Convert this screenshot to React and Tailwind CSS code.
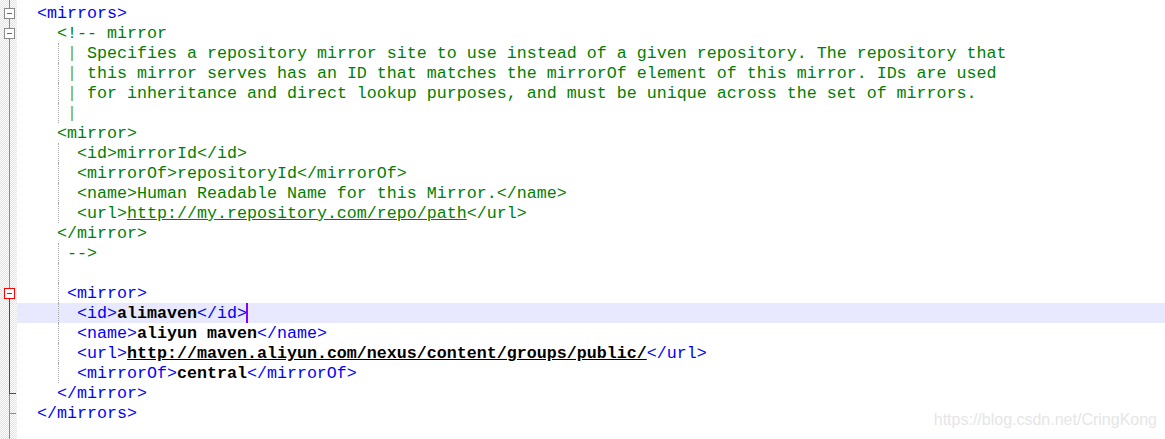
import React from 'react';

// segment kinds: tag (blue), com (green comment), pipe, bold, burl (bold underlined), curl (comment underlined)
const lines = [
    [['tag', '<mirrors>']],
    [['com', '  <!-- mirror']],
    [['com', '   '], ['pipe', '|'], ['com', ' Specifies a repository mirror site to use instead of a given repository. The repository that']],
    [['com', '   '], ['pipe', '|'], ['com', ' this mirror serves has an ID that matches the mirrorOf element of this mirror. IDs are used']],
    [['com', '   '], ['pipe', '|'], ['com', ' for inheritance and direct lookup purposes, and must be unique across the set of mirrors.']],
    [['com', '   '], ['pipe', '|']],
    [['com', '  <mirror>']],
    [['com', '    <id>mirrorId</id>']],
    [['com', '    <mirrorOf>repositoryId</mirrorOf>']],
    [['com', '    <name>Human Readable Name for this Mirror.</name>']],
    [['com', '    <url>'], ['curl', 'http://my.repository.com/repo/path'], ['com', '</url>']],
    [['com', '  </mirror>']],
    [['com', '   -->']],
    [],
    [['tag', '   <mirror>']],
    [['tag', '    <id>'], ['bold', 'alimaven'], ['tag', '</id>'], ['cursor', '']],
    [['tag', '    <name>'], ['bold', 'aliyun maven'], ['tag', '</name>']],
    [['tag', '    <url>'], ['burl', 'http://maven.aliyun.com/nexus/content/groups/public/'], ['tag', '</url>']],
    [['tag', '    <mirrorOf>'], ['bold', 'central'], ['tag', '</mirrorOf>']],
    [['tag', '  </mirror>']],
    [['tag', '</mirrors>']],
];

const guideLines = [2, 3, 4, 5, 7, 8, 9, 10, 12, 13, 14, 15, 16, 17, 18];

const Segment = ({ kind, text }) => {
    if (kind === 'tag') return <span className="text-[#0000ff]">{text}</span>;
    if (kind === 'com') return <span className="text-[#008000]">{text}</span>;
    if (kind === 'pipe') return <span className="text-[#6cb000]">{text}</span>;
    if (kind === 'bold') return <span className="font-bold text-black">{text}</span>;
    if (kind === 'burl') return <span className="font-bold text-black underline">{text}</span>;
    if (kind === 'curl') return <span className="text-[#008000] underline">{text}</span>;
    if (kind === 'cursor') return <span className="inline-block w-[2px] h-[20px] align-top -ml-[1px] bg-[#8000ff]" />;
    return null;
};

const FoldBox = ({ red }) => (
    <div className={`relative z-10 ml-[4px] w-[11px] h-[11px] border bg-white flex items-center justify-center ${red ? 'border-[#ff0000]' : 'border-[#8c8c8c]'}`}>
        <div className={`w-[5px] h-px ${red ? 'bg-[#ff0000]' : 'bg-[#666]'}`} />
    </div>
);

const GutterCell = ({ i }) => {
    if (i === 0 || i === 1) {
        return (
            <div className="h-[20px] flex items-center">
                <FoldBox />
            </div>
        );
    }
    if (i === 14) {
        return (
            <div className="h-[20px] flex flex-col pt-[5px]">
                <FoldBox red />
                <div className="relative z-10 ml-[9px] w-px flex-1 bg-[#ff0000]" />
            </div>
        );
    }
    if (i >= 15 && i <= 18) {
        return (
            <div className="h-[20px] flex">
                <div className="relative z-10 ml-[9px] w-px bg-[#ff0000]" />
            </div>
        );
    }
    if (i === 19) {
        return (
            <div className="h-[20px]">
                <div className="relative z-10 ml-[9px] w-[7px] h-[11px] border-l border-b border-[#ff0000]" />
            </div>
        );
    }
    if (i === 20) {
        return (
            <div className="h-[20px] pt-[10px]">
                <div className="ml-[9px] w-[7px] h-px bg-[#8c8c8c]" />
            </div>
        );
    }
    return <div className="h-[20px]" />;
};

const App = () => {
    return (
        <div className="relative w-[1165px] h-[439px] bg-white overflow-hidden flex">
            {/* fold margin */}
            <div className="relative w-[17px] shrink-0 pt-[3px] bg-[repeating-conic-gradient(#e2e2e2_0_25%,#ffffff_0_50%)] bg-[length:2px_2px]">
                <div className="absolute left-[9px] top-0 bottom-0 w-px bg-[#8c8c8c]" />
                {lines.map((_, i) => (
                    <GutterCell key={i} i={i} />
                ))}
            </div>

            {/* editor text */}
            <div className="flex-1 pt-[3px] font-['Liberation_Mono','Courier_New',monospace] text-[16.667px]">
                {lines.map((segs, i) => (
                    <div
                        key={i}
                        className={`relative h-[20px] leading-[22px] pl-[20px] whitespace-pre ${i === 15 ? 'bg-[#e8e8ff]' : ''}`}
                    >
                        {guideLines.includes(i) && (
                            <span className="absolute left-[41px] top-0 h-[20px] border-l border-dotted border-[#a8a8a8]" />
                        )}
                        {segs.map(([kind, text], j) => (
                            <Segment key={j} kind={kind} text={text} />
                        ))}
                    </div>
                ))}
            </div>

            {/* watermark */}
            <div className="absolute right-[8px] bottom-[11px] leading-none text-[16px] text-[#e6e6e6] font-['Liberation_Sans',Arial,sans-serif]">
                https://blog.csdn.net/CringKong
            </div>
        </div>
    );
};

export default App;
